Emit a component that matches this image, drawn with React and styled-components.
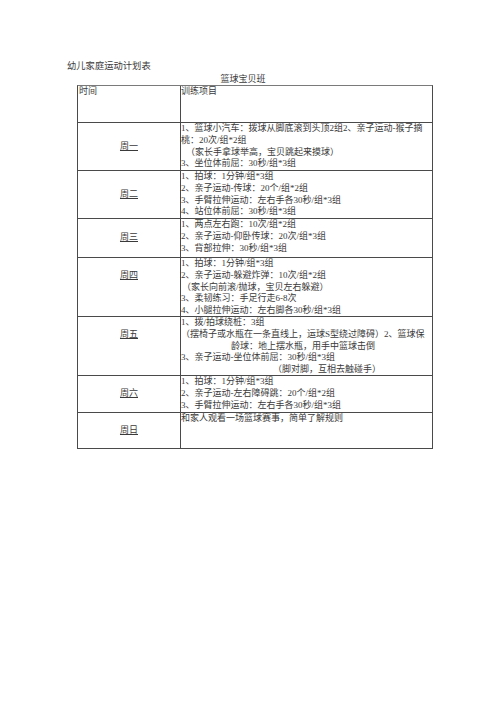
import React from 'react';
import styled, { createGlobalStyle } from 'styled-components';

const GlobalStyle = createGlobalStyle`
    html, body {
        margin: 0;
        padding: 0;
        background: #ffffff;
    }
    body {
        font-family: "Liberation Serif", "Noto Sans CJK SC", serif;
        color: #3a3a3a;
    }
`;

const Page = styled.div`
    width: 500px;
    min-height: 707px;
    padding: 60px 0 0 67px;
    box-sizing: border-box;
`;

const Title = styled.div`
    font-size: 9.3px;
    line-height: 12px;
    height: 12px;
    margin-bottom: 1px;
    white-space: nowrap;
`;

const Caption = styled.div`
    width: 356px;
    margin-left: 10px;
    padding-right: 24px;
    box-sizing: border-box;
    font-size: 9px;
    line-height: 12px;
    height: 12px;
    text-align: center;
    white-space: nowrap;
`;

const Sheet = styled.div`
    display: grid;
    grid-template-columns: 103px 251px;
    grid-template-rows: 37px 48px 48px 39px 59px 59px 37px 36px;
    width: 356px;
    margin-left: 10px;
    box-sizing: border-box;
    border-top: 1px solid #7a7a7a;
    border-left: 1px solid #4a4a4a;
    border-right: 1px solid #4a4a4a;
    font-size: 9px;
    line-height: 11.8px;
`;

const Cell = styled.div`
    box-sizing: border-box;
    border-bottom: 1px solid #4a4a4a;
    overflow: hidden;
`;

const HeadCell = styled(Cell)`
    padding-left: ${({ $first }) => ($first ? '1px' : '0')};
    border-right: ${({ $first }) => ($first ? '1px solid #4a4a4a' : 'none')};
`;

const DayCell = styled(Cell)`
    display: flex;
    align-items: center;
    justify-content: center;
    border-right: 1px solid #4a4a4a;
    padding-bottom: ${({ $lift }) => ($lift ? '23px' : '0')};
`;

const DayLabel = styled.span`
    text-decoration: underline;
    text-underline-offset: 1px;
    text-decoration-thickness: 1px;
    color: #3a3a3a;
`;

const TaskCell = styled(Cell)`
    padding: 0;
`;

const Line = styled.div`
    white-space: nowrap;
    padding-left: ${({ $indent }) => $indent || 0}px;
`;

const plan = [
    {
        day: '周一',
        lines: [
            ['1、篮球小汽车：拨球从脚底滚到头顶2组2、亲子运动-猴子摘'],
            ['桃：20次/组*2组'],
            ['（家长手拿球举高，宝贝跳起来摸球）', 5],
            ['3、坐位体前屈：30秒/组*3组'],
        ],
    },
    {
        day: '周二',
        lines: [
            ['1、拍球：1分钟/组*3组'],
            ['2、亲子运动-传球：20个/组*2组'],
            ['3、手臂拉伸运动：左右手各30秒/组*3组'],
            ['4、站位体前屈：30秒/组*3组'],
        ],
    },
    {
        day: '周三',
        lines: [
            ['1、两点左右跑：10次/组*2组'],
            ['2、亲子运动-仰卧传球：20次/组*3组'],
            ['3、背部拉伸：30秒/组*3组'],
        ],
    },
    {
        day: '周四',
        lift: true,
        lines: [
            ['1、拍球：1分钟/组*3组'],
            ['2、亲子运动-躲避炸弹：10次/组*2组'],
            ['（家长向前滚/抛球，宝贝左右躲避）', 1],
            ['3、柔韧练习：手足行走6-8次'],
            ['4、小腿拉伸运动：左右脚各30秒/组*3组'],
        ],
    },
    {
        day: '周五',
        lift: true,
        lines: [
            ['1、拨/拍球绕桩：3组'],
            ['（摆椅子或水瓶在一条直线上，运球S型绕过障碍）2、篮球保'],
            ['龄球：地上摆水瓶，用手中篮球击倒', 50],
            ['3、亲子运动-坐位体前屈：30秒/组*3组'],
            ['（脚对脚，互相去触碰手）', 92],
        ],
    },
    {
        day: '周六',
        lines: [
            ['1、拍球：1分钟/组*3组'],
            ['2、亲子运动-左右障碍跳：20个/组*2组'],
            ['3、手臂拉伸运动：左右手各30秒/组*3组'],
        ],
    },
    {
        day: '周日',
        lines: [['和家人观看一场篮球赛事，简单了解规则']],
    },
];

export default function App() {
    return (
        <>
            <GlobalStyle />
            <Page>
                <Title>幼儿家庭运动计划表</Title>
                <Caption>篮球宝贝班</Caption>
                <Sheet>
                    <HeadCell $first>时间</HeadCell>
                    <HeadCell>训练项目</HeadCell>
                    {plan.map((row) => (
                        <React.Fragment key={row.day}>
                            <DayCell $lift={row.lift}>
                                <DayLabel>{row.day}</DayLabel>
                            </DayCell>
                            <TaskCell>
                                {row.lines.map(([text, indent], i) => (
                                    <Line key={i} $indent={indent}>
                                        {text}
                                    </Line>
                                ))}
                            </TaskCell>
                        </React.Fragment>
                    ))}
                </Sheet>
            </Page>
        </>
    );
}
